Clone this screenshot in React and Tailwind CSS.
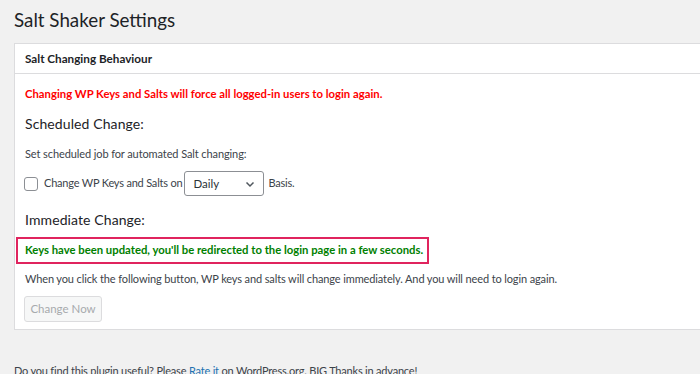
export default function App() {
  return (
    <div className="min-h-screen bg-[#f1f1f1] text-[#3c434a] font-['Lato',sans-serif] pl-[14px] pt-[7px] overflow-hidden h-[374px]">
      <h1 className="text-[18.8px] leading-[26px] text-[#1d2327]">Salt Shaker Settings</h1>
      <div className="mt-[10px] bg-white border border-r-0 border-[#dcdcde] h-[287px]">
        <div className="h-[30px] border-b border-[#dcdcde] px-[10px] flex items-center text-[11.7px] font-bold text-[#1d2327]">
          Salt Changing Behaviour
        </div>
        <div className="px-[10px]">
          <p className="mt-[11px] text-[11.3px] leading-[18px] font-bold text-[#ff0000] whitespace-nowrap">
            Changing WP Keys and Salts will force all logged-in users to login again.
          </p>
          <h2 className="mt-[10px] text-[14px] leading-[22px] text-[#1d2327] tracking-[0.1px]">Scheduled Change:</h2>
          <p className="mt-[10px] text-[11px] leading-[18px] tracking-[-0.1px]">Set scheduled job for automated Salt changing:</p>
          <div className="mt-[8px] flex items-center text-[11px] tracking-[-0.2px]">
            <span className="ml-[-1px] w-[14px] h-[14px] border border-[#8c8f94] rounded-[3px] bg-white"></span>
            <span className="ml-[6px]">Change WP Keys and Salts on</span>
            <div className="ml-[2px] w-[80px] h-[25px] border border-[#8c8f94] rounded-[3px] flex items-center justify-between px-[8px] text-[#2c3338] text-[11.5px] tracking-normal">
              <span>Daily</span>
              <svg width="10" height="10" viewBox="0 0 10 10" fill="none" stroke="#50575e" strokeWidth="1.5">
                <path d="M1.5 3.5 L5 7 L8.5 3.5" />
              </svg>
            </div>
            <span className="ml-[4px]">Basis.</span>
          </div>
          <h2 className="mt-[13px] text-[14px] leading-[22px] text-[#1d2327] tracking-[0.1px]">Immediate Change:</h2>
        </div>
        <div className="ml-[1px] mt-[6px] w-[413px] h-[27px] border-2 border-[#e0245e] flex items-center pl-[7px] text-[11.3px] font-bold text-[#008000] whitespace-nowrap">
          Keys have been updated, you'll be redirected to the login page in a few seconds.
        </div>
        <div className="px-[10px]">
          <p className="mt-[6px] text-[11px] leading-[18px] whitespace-nowrap tracking-[-0.12px]">
            When you click the following button, WP keys and salts will change immediately. And you will need to login again.
          </p>
          <button className="mt-[8px] ml-[-1px] w-[78px] h-[26px] border border-[#dcdcde] rounded-[3px] bg-[#f6f7f7] text-[11.5px] text-[#a7aaad]">
            Change Now
          </button>
        </div>
      </div>
      <p className="mt-[32px] text-[11px] leading-[18px] whitespace-nowrap tracking-[-0.2px]">
        Do you find this plugin useful? Please <span className="text-[#2271b1]">Rate it</span> on WordPress.org. BIG Thanks in advance!
      </p>
    </div>
  );
}
